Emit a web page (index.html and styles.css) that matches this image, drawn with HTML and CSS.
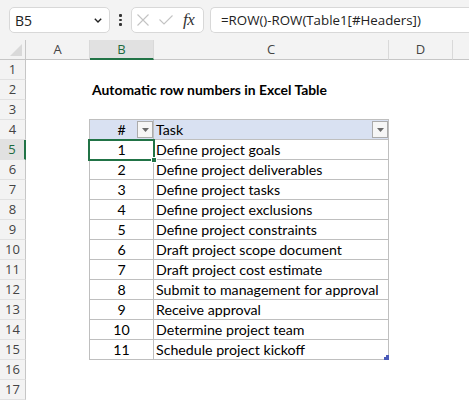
FILE: index.html
```html
<!DOCTYPE html>
<html>
<head>
<meta charset="utf-8">
<link rel="stylesheet" href="styles.css">
</head>
<body>
<div class="app">
  <div class="topbar">
    <div class="namebox">
      <span class="nb-text">B5</span>
      <svg class="chev" width="8" height="5" viewBox="0 0 8 5"><path d="M0.8 0.8 L4 4 L7.2 0.8" fill="none" stroke="#222" stroke-width="1.4"/></svg>
    </div>
    <div class="dots"><i></i><i></i><i></i></div>
    <div class="fxbox">
      <svg class="ic-x" width="12" height="12" viewBox="0 0 12 12"><path d="M0.5 0.5 L11.5 11.5 M11.5 0.5 L0.5 11.5" stroke="#c3c3c3" stroke-width="1.1" fill="none"/></svg>
      <svg class="ic-ok" width="14" height="10" viewBox="0 0 14 10"><path d="M0.5 4.5 L5 9 L13.5 0.5" stroke="#c3c3c3" stroke-width="1.1" fill="none"/></svg>
      <span class="fx">fx</span>
    </div>
    <div class="formula">=ROW()-ROW(Table1[#Headers])</div>
  </div>
  <div class="sheet">
    <div class="rowheads">
      <div class="corner"><svg width="12" height="12" viewBox="0 0 12 12"><path d="M12 0 L12 12 L0 12 Z" fill="#d9d9d9"/></svg></div>
      <div class="rh">1</div>
      <div class="rh">2</div>
      <div class="rh">3</div>
      <div class="rh">4</div>
      <div class="rh rh-sel">5</div>
      <div class="rh">6</div>
      <div class="rh">7</div>
      <div class="rh">8</div>
      <div class="rh">9</div>
      <div class="rh">10</div>
      <div class="rh">11</div>
      <div class="rh">12</div>
      <div class="rh">13</div>
      <div class="rh">14</div>
      <div class="rh">15</div>
      <div class="rh">16</div>
      <div class="rh">17</div>
    </div>
    <div class="main">
      <div class="colheads">
        <div class="ch col-a">A</div>
        <div class="ch col-b ch-sel">B</div>
        <div class="ch col-c">C</div>
        <div class="ch col-d">D</div>
        <div class="ch col-e"></div>
      </div>
      <div class="body">
        <div class="row"></div>
        <div class="row title">Automatic row numbers in Excel Table</div>
        <div class="row row-short"></div>
        <div class="tbl">
          <div class="tr th">
            <div class="td num">#<span class="filter"><svg width="7" height="4" viewBox="0 0 7 4"><path d="M0 0 L7 0 L3.5 4 Z" fill="#6a6a6a"/></svg></span></div>
            <div class="td task">Task<span class="filter"><svg width="7" height="4" viewBox="0 0 7 4"><path d="M0 0 L7 0 L3.5 4 Z" fill="#6a6a6a"/></svg></span></div>
          </div>
          <div class="tr"><div class="td num">1</div><div class="td task">Define project goals</div></div>
          <div class="tr"><div class="td num">2</div><div class="td task">Define project deliverables</div></div>
          <div class="tr"><div class="td num">3</div><div class="td task">Define project tasks</div></div>
          <div class="tr"><div class="td num">4</div><div class="td task">Define project exclusions</div></div>
          <div class="tr"><div class="td num">5</div><div class="td task">Define project constraints</div></div>
          <div class="tr"><div class="td num">6</div><div class="td task">Draft project scope document</div></div>
          <div class="tr"><div class="td num">7</div><div class="td task">Draft project cost estimate</div></div>
          <div class="tr"><div class="td num">8</div><div class="td task">Submit to management for approval</div></div>
          <div class="tr"><div class="td num">9</div><div class="td task">Receive approval</div></div>
          <div class="tr"><div class="td num">10</div><div class="td task">Determine project team</div></div>
          <div class="tr"><div class="td num">11</div><div class="td task">Schedule project kickoff</div></div>
          <div class="selbox"><span class="handle"></span></div>
          <svg class="resize" width="5" height="5" viewBox="0 0 5 5"><path d="M2 0 H5 V5 H0 V2 H2 Z" fill="#4a5ab8"/></svg>
        </div>
        <div class="row"></div>
        <div class="row"></div>
      </div>
    </div>
  </div>
</div>
</body>
</html>
```

FILE: styles.css
```css
* { box-sizing: border-box; }
html, body { margin: 0; padding: 0; }
body {
  width: 469px;
  height: 400px;
  overflow: hidden;
  background: #ffffff;
  font-family: "Open Sans", "Noto Sans", sans-serif;
}
.app { width: 469px; height: 400px; overflow: hidden; }

/* Top formula bar */
.topbar {
  height: 40px;
  background: #f3f3f3;
  display: flex;
  align-items: flex-start;
  padding-top: 7px;
  white-space: nowrap;
}
.namebox {
  margin-left: 9px;
  width: 101px;
  height: 26px;
  background: #fff;
  border: 1px solid #d8d8d8;
  border-radius: 5px;
  display: flex;
  align-items: center;
  justify-content: space-between;
  padding: 0 7px 0 5px;
}
.nb-text { font-size: 14px; color: #222; }
.chev { display: block; }
.dots {
  width: 21px;
  height: 26px;
  display: flex;
  flex-direction: column;
  align-items: center;
  justify-content: center;
  gap: 2px;
}
.dots i { display: block; width: 2.5px; height: 2.5px; background: #333; border-radius: 1px; }
.fxbox {
  width: 73px;
  height: 26px;
  background: #fff;
  border: 1px solid #d8d8d8;
  border-radius: 5px;
  display: flex;
  align-items: center;
  padding-left: 5px;
}
.ic-x { display: block; margin-right: 10px; }
.ic-ok { display: block; margin-right: 10px; }
.fx {
  font-family: "Liberation Serif", "DejaVu Serif", serif;
  font-style: italic;
  font-size: 17px;
  color: #333;
  letter-spacing: -0.5px;
}
.formula {
  margin-left: 6px;
  flex: 1;
  height: 26px;
  background: #fff;
  border: 1px solid #d8d8d8;
  border-right: none;
  border-radius: 5px 0 0 5px;
  padding-left: 10px;
  font-size: 13.3px;
  line-height: 24px;
  color: #222;
}

/* Sheet */
.sheet { display: flex; height: 360px; }
.rowheads { width: 26px; flex: none; background: #f3f3f3; }
.corner {
  height: 20px;
  border-right: 1px solid #c6c6c6;
  border-bottom: 1px solid #c6c6c6;
  display: flex;
  align-items: flex-end;
  justify-content: flex-end;
  padding: 0 3px 3px 0;
}
.corner svg { display: block; }
.rh {
  height: 20px;
  border-right: 1px solid #c6c6c6;
  border-bottom: 1px solid #e1e1e1;
  font-size: 13px;
  line-height: 19px;
  text-align: center;
  color: #444;
}
.rh-sel {
  background: #e1e1e1;
  color: #1d6b3f;
  border-right: 2px solid #217346;
}
.main { flex: 1; min-width: 0; }
.colheads { display: flex; height: 20px; background: #f3f3f3; }
.ch {
  flex: none;
  height: 20px;
  border-right: 1px solid #d9d9d9;
  border-bottom: 1px solid #c6c6c6;
  font-size: 13px;
  line-height: 19px;
  text-align: center;
  color: #444;
}
.col-a { width: 64px; }
.col-b { width: 64px; }
.col-c { width: 235px; }
.col-d { width: 64px; }
.col-e { flex: 1; border-right: none; }
.ch-sel {
  background: #e1e1e1;
  color: #1d6b3f;
  border-bottom: 2px solid #217346;
}

.body {
  font-family: "Lato", "Liberation Sans", sans-serif;
  font-size: 14.2px;
  color: #000;
}
.row { height: 20px; }
.row-short { height: 19px; }
.title {
  padding-left: 66px;
  font-weight: bold;
  font-size: 13.9px;
  line-height: 20px;
}
.tbl {
  position: relative;
  margin-left: 63px;
  width: 300px;
  border-left: 1px solid #bfbfbf;
  border-top: 1px solid #bfbfbf;
}
.tr { display: grid; grid-template-columns: 64px 235px; height: 20px; }
.td {
  position: relative;
  height: 20px;
  border-right: 1px solid #bfbfbf;
  border-bottom: 1px solid #bfbfbf;
  line-height: 19px;
  white-space: nowrap;
}
.num { text-align: center; }
.task { padding-left: 2px; }
.th .td { background: #d9e1f2; }
.filter {
  position: absolute;
  right: 0;
  top: 1px;
  width: 16px;
  height: 17px;
  border: 1px solid #ababab;
  background: #f6f6f6;
  display: flex;
  align-items: center;
  justify-content: center;
}
.filter svg { display: block; }
.selbox {
  position: absolute;
  left: -2px;
  top: 19px;
  width: 67px;
  height: 22px;
  border: 2px solid #217346;
}
.handle {
  position: absolute;
  right: -4px;
  bottom: -4px;
  width: 6px;
  height: 6px;
  background: #217346;
  border: 1px solid #fff;
}
.resize { position: absolute; right: 0; bottom: 0; display: block; }
```
